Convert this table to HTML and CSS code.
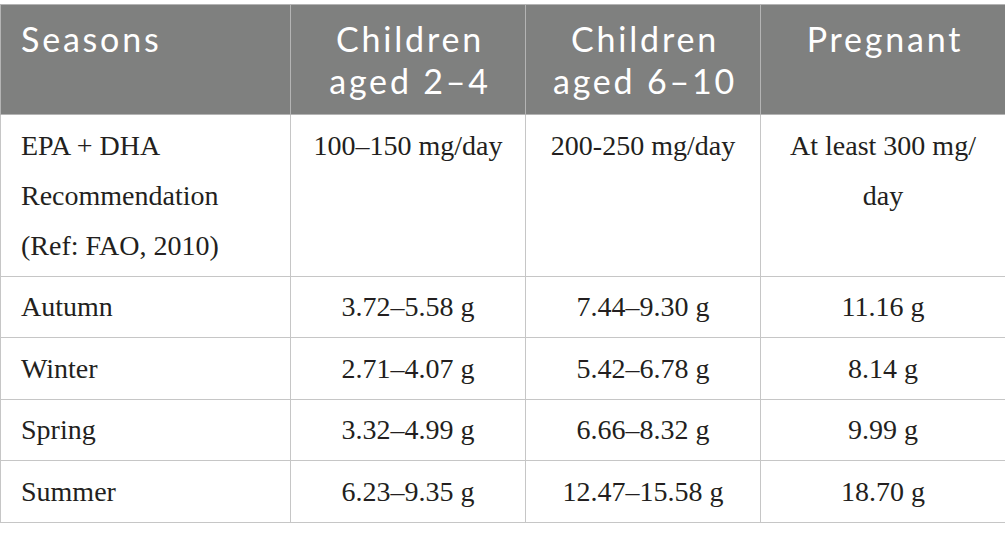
FILE: index.html
```html
<!DOCTYPE html>
<html lang="en">
<head>
<meta charset="utf-8">
<title>EPA + DHA recommendations by season</title>
<link rel="stylesheet" href="styles.css">
</head>
<body>
<table class="data-table">
  <colgroup>
    <col class="c1">
    <col class="c2">
    <col class="c3">
    <col class="c4">
  </colgroup>
  <thead>
    <tr>
      <th class="col-first">Seasons</th>
      <th>Children<br>aged 2–4</th>
      <th>Children<br>aged 6–10</th>
      <th>Pregnant</th>
    </tr>
  </thead>
  <tbody>
    <tr>
      <td class="col-first">EPA + DHA<br>Recommendation<br>(Ref: FAO, 2010)</td>
      <td>100–150 mg/day</td>
      <td>200-250 mg/day</td>
      <td>At least 300 mg/<wbr>day</td>
    </tr>
    <tr>
      <td class="col-first">Autumn</td>
      <td>3.72–5.58 g</td>
      <td>7.44–9.30 g</td>
      <td>11.16 g</td>
    </tr>
    <tr>
      <td class="col-first">Winter</td>
      <td>2.71–4.07 g</td>
      <td>5.42–6.78 g</td>
      <td>8.14 g</td>
    </tr>
    <tr>
      <td class="col-first">Spring</td>
      <td>3.32–4.99 g</td>
      <td>6.66–8.32 g</td>
      <td>9.99 g</td>
    </tr>
    <tr>
      <td class="col-first">Summer</td>
      <td>6.23–9.35 g</td>
      <td>12.47–15.58 g</td>
      <td>18.70 g</td>
    </tr>
  </tbody>
</table>
</body>
</html>
```

FILE: styles.css
```css
html, body {
  margin: 0;
  padding: 0;
  background: #ffffff;
}

body {
  padding-top: 4px;
}

.data-table {
  width: 1005px;
  border-collapse: collapse;
  table-layout: fixed;
}

.data-table .c1 { width: 290px; }
.data-table .c2 { width: 235px; }
.data-table .c3 { width: 235px; }
.data-table .c4 { width: 245px; }

.data-table th {
  background: #7f807f;
  color: #ffffff;
  font-family: Lato, "DejaVu Sans", sans-serif;
  font-weight: normal;
  font-size: 34px;
  letter-spacing: 2.8px;
  line-height: 42px;
  text-align: center;
  vertical-align: top;
  padding: 13px 16px 12px 20px;
  border: 1px solid #b4b4b4;
}

.data-table td {
  font-family: "Liberation Serif", "Times New Roman", serif;
  font-size: 28px;
  line-height: 50px;
  color: #231f20;
  text-align: center;
  vertical-align: top;
  padding: 5.75px 20px 4.75px 20px;
  border: 1px solid #c6c6c6;
}

.data-table .col-first {
  text-align: left;
}
```
